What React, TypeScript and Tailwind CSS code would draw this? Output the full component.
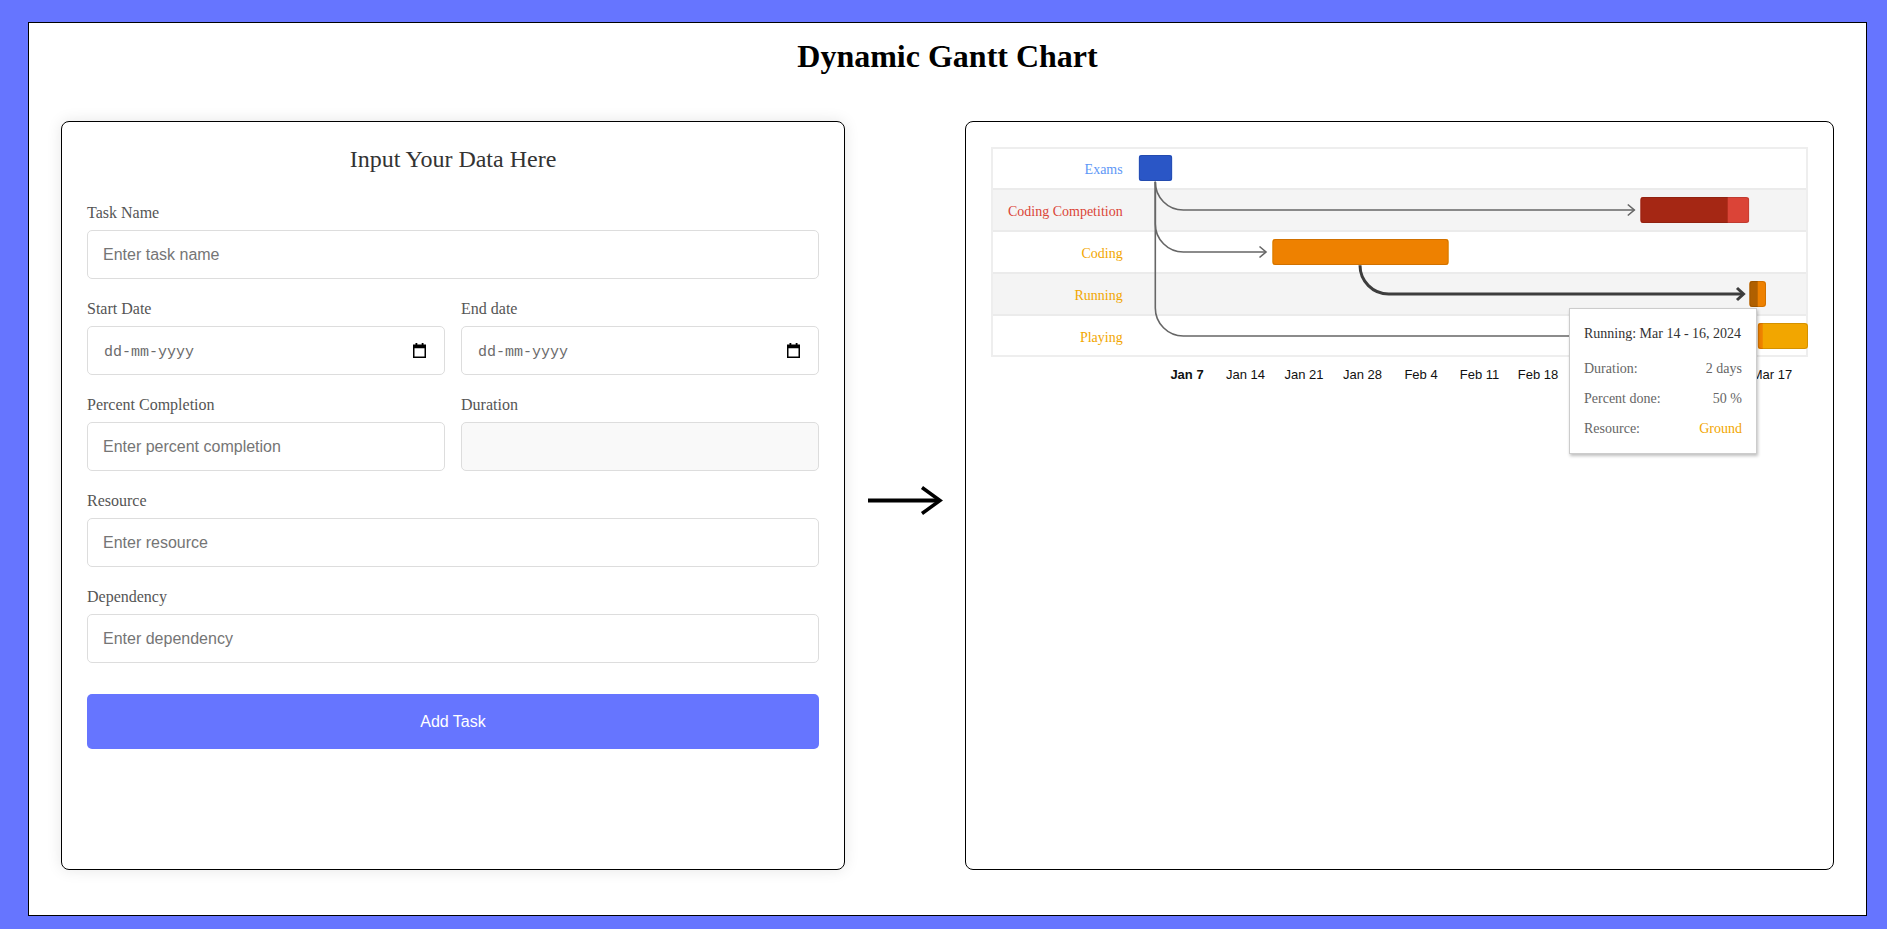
import React from "react";

// Gantt geometry (px, relative to the chart frame)
const ROW_H = 42;
const CHART_W = 817;

const rows = [
  { name: "Exams", color: "#5e97f6" },
  { name: "Coding Competition", color: "#db4437" },
  { name: "Coding", color: "#f2a600" },
  { name: "Running", color: "#f2a600" },
  { name: "Playing", color: "#f2a600" },
];

const bars = [
  { row: 0, x: 147.7, w: 33.6, done: 33.6, dark: "#2a56c6", light: "#5e97f6" },
  { row: 1, x: 649.3, w: 109, done: 87.4, dark: "#a52714", light: "#db4437" },
  { row: 2, x: 281.3, w: 176.4, done: 176.4, dark: "#ee8100", light: "#f2a600" },
  { row: 3, x: 758.3, w: 16.7, done: 8.4, dark: "#b06000", light: "#ee8100" },
  { row: 4, x: 766.7, w: 50.3, done: 5, dark: "#ee8100", light: "#f2a600" },
];

// weekly ticks; the ones under the tooltip (Feb 25, Mar 3, Mar 10) are hidden
const ticks = [
  { label: "Jan 7", i: 0 },
  { label: "Jan 14", i: 1 },
  { label: "Jan 21", i: 2 },
  { label: "Jan 28", i: 3 },
  { label: "Feb 4", i: 4 },
  { label: "Feb 11", i: 5 },
  { label: "Feb 18", i: 6 },
  { label: "Mar 17", i: 10 },
];

function GanttChart() {
  const mid = (r: number) => r * ROW_H + ROW_H / 2;
  return (
    <svg width={CHART_W} height={240} className="block overflow-visible">
      <defs>
        {bars.map((b, i) => (
          <clipPath id={`bar-clip-${i}`} key={i}>
            <rect x={b.x} y={b.row * ROW_H + 8} width={b.w} height={26} rx={3} />
          </clipPath>
        ))}
      </defs>

      {/* row stripes */}
      {rows.map((_, i) => (
        <rect key={i} x={0} y={i * ROW_H} width={CHART_W} height={ROW_H} fill={i % 2 ? "#f4f4f4" : "#ffffff"} />
      ))}
      {[42, 84, 126, 168].map((y) => (
        <line key={y} x1={0} x2={CHART_W} y1={y} y2={y} stroke="#ebebeb" strokeWidth={2} />
      ))}
      <rect x={1} y={1} width={CHART_W - 2} height={208} fill="none" stroke="#eeeeee" strokeWidth={2} />

      {/* track labels */}
      {rows.map((r, i) => (
        <text
          key={r.name}
          x={131.7}
          y={mid(i) + 5.5}
          textAnchor="end"
          fontSize={14}
          fill={r.color}
          fontFamily="'Liberation Serif', 'Times New Roman', serif"
        >
          {r.name}
        </text>
      ))}

      {/* dependency arrows */}
      <g fill="none" stroke="#666666" strokeWidth={1.6}>
        <path d={`M164.3 34.7 A28 28 0 0 0 192.3 ${mid(1)} L643.3 ${mid(1)}`} />
        <path d={`M636.8 ${mid(1) - 5.5} L643.3 ${mid(1)} L636.8 ${mid(1) + 5.5}`} />
        <path d={`M164.3 34.7 L164.3 ${mid(2) - 28} A28 28 0 0 0 192.3 ${mid(2)} L275 ${mid(2)}`} />
        <path d={`M268.5 ${mid(2) - 5.5} L275 ${mid(2)} L268.5 ${mid(2) + 5.5}`} />
        <path d={`M164.3 34.7 L164.3 ${mid(4) - 28} A28 28 0 0 0 192.3 ${mid(4)} L760 ${mid(4)}`} />
        <path d={`M753.5 ${mid(4) - 5.5} L760 ${mid(4)} L753.5 ${mid(4) + 5.5}`} />
      </g>
      <g fill="none" stroke="#3d3d3d" strokeWidth={3}>
        <path d={`M369 118.3 A28.7 28.7 0 0 0 397.7 ${mid(3)} L752 ${mid(3)}`} />
        <path d={`M746 ${mid(3) - 6} L752.5 ${mid(3)} L746 ${mid(3) + 6}`} />
      </g>

      {/* bars */}
      {bars.map((b, i) => (
        <g key={i} clipPath={`url(#bar-clip-${i})`}>
          <rect x={b.x} y={b.row * ROW_H + 8} width={b.w} height={26} fill={b.light} />
          <rect x={b.x} y={b.row * ROW_H + 8} width={b.done} height={26} fill={b.dark} />
          <rect
            x={b.x + 0.5}
            y={b.row * ROW_H + 8.5}
            width={b.w - 1}
            height={25}
            rx={3}
            fill="none"
            stroke="rgba(0,0,0,0.12)"
            strokeWidth={1}
          />
        </g>
      ))}

      {/* time axis */}
      {ticks.map((t) => (
        <text
          key={t.label}
          x={196 + t.i * 58.5}
          y={232.3}
          textAnchor="middle"
          fontSize={13}
          fontWeight={t.i === 0 ? 700 : 400}
          fill="#111111"
          fontFamily="'Liberation Sans', Arial, sans-serif"
        >
          {t.label}
        </text>
      ))}
    </svg>
  );
}

function CalendarIcon() {
  return (
    <svg width={13} height={15} viewBox="0 0 13 15" className="shrink-0">
      <rect x={2.5} y={0} width={1.8} height={3} fill="#000" />
      <rect x={8.7} y={0} width={1.8} height={3} fill="#000" />
      <rect x={0.75} y={2.25} width={11.5} height={12} fill="none" stroke="#000" strokeWidth={1.5} />
      <rect x={0.75} y={2.25} width={11.5} height={3} fill="#000" />
    </svg>
  );
}

function Field({ label, children }: { label: string; children: React.ReactNode }) {
  return (
    <div className="mb-[21px]">
      <label className="block mb-[8px] text-[16px] leading-[18px] text-[#555555]">{label}</label>
      {children}
    </div>
  );
}

const inputCls =
  "block w-full h-[49px] rounded-[5px] border border-[#dddddd] bg-white px-[15px] text-[16px] text-[#333333] font-[family-name:'Liberation_Sans',Arial,sans-serif] placeholder:text-[#757575] outline-none";

function DateBox() {
  return (
    <div className="flex h-[49px] items-center justify-between rounded-[5px] border border-[#dddddd] bg-white pl-[16px] pr-[18px]">
      <span className="pt-[6px] text-[15px] text-[#6b6b6b] font-[family-name:'Liberation_Mono','DejaVu_Sans_Mono',monospace]">
        dd-mm-yyyy
      </span>
      <CalendarIcon />
    </div>
  );
}

export default function App() {
  return (
    <div className="min-h-screen bg-[#6675ff] pt-[22px] pl-[28px] pr-[20px] font-[family-name:'Liberation_Serif','Times_New_Roman',serif]">
      <div className="h-[894px] border border-black bg-white">
        <h1 className="mt-[15px] mb-[47px] text-center text-[32px] leading-[36px] font-bold text-black">
          Dynamic Gantt Chart
        </h1>

        <div className="flex px-[32px]">
          {/* Form panel */}
          <div className="w-[784px] h-[749px] shrink-0 rounded-lg border border-black bg-white px-[25px] pt-[24px] shadow-[0_0_15px_rgba(0,0,0,0.1)]">
            <h2 className="mb-[31px] text-center text-[24px] leading-[27px] text-[#333333]">Input Your Data Here</h2>

            <Field label="Task Name">
              <input className={inputCls} placeholder="Enter task name" />
            </Field>

            <div className="grid grid-cols-2 gap-x-4">
              <Field label="Start Date">
                <DateBox />
              </Field>
              <Field label="End date">
                <DateBox />
              </Field>
            </div>

            <div className="grid grid-cols-2 gap-x-4">
              <Field label="Percent Completion">
                <input className={inputCls} placeholder="Enter percent completion" />
              </Field>
              <Field label="Duration">
                <div className="h-[49px] rounded-[5px] border border-[#dddddd] bg-[#f9f9f9]" />
              </Field>
            </div>

            <Field label="Resource">
              <input className={inputCls} placeholder="Enter resource" />
            </Field>

            <Field label="Dependency">
              <input className={inputCls} placeholder="Enter dependency" />
            </Field>

            <button className="mt-[31px] block h-[55px] w-full rounded-[5px] bg-[#6675ff] text-[16px] text-white font-[family-name:'Liberation_Sans',Arial,sans-serif]">
              Add Task
            </button>
          </div>

          {/* Arrow between panels */}
          <div className="flex w-[120px] shrink-0 items-center justify-center">
            <svg width={90} height={40} viewBox="0 0 90 40">
              <line x1={8} y1={24.5} x2={78} y2={24.5} stroke="#000" strokeWidth={4} />
              <path d="M62 11.5 L80 24.5 L62 37.5" fill="none" stroke="#000" strokeWidth={3.5} strokeLinejoin="miter" />
            </svg>
          </div>

          {/* Chart panel */}
          <div className="relative w-[869px] h-[749px] shrink-0 rounded-lg border border-black bg-white p-[25px]">
            <GanttChart />

            {/* hover tooltip */}
            <div className="absolute left-[603px] top-[186px] w-[188px] h-[146px] border border-[#cccccc] bg-white px-[14px] pt-[16px] text-[14px] leading-[18px] shadow-[1px_2px_3px_rgba(0,0,0,0.25)]">
              <div className="text-[#333333] whitespace-nowrap">Running: Mar 14 - 16, 2024</div>
              <div className="mt-[17px] flex flex-col gap-[12px] text-[#666666]">
                <div className="flex justify-between">
                  <span>Duration:</span>
                  <span>2 days</span>
                </div>
                <div className="flex justify-between">
                  <span>Percent done:</span>
                  <span>50 %</span>
                </div>
                <div className="flex justify-between">
                  <span>Resource:</span>
                  <span className="text-[#f2a600]">Ground</span>
                </div>
              </div>
            </div>
          </div>
        </div>
      </div>
    </div>
  );
}
